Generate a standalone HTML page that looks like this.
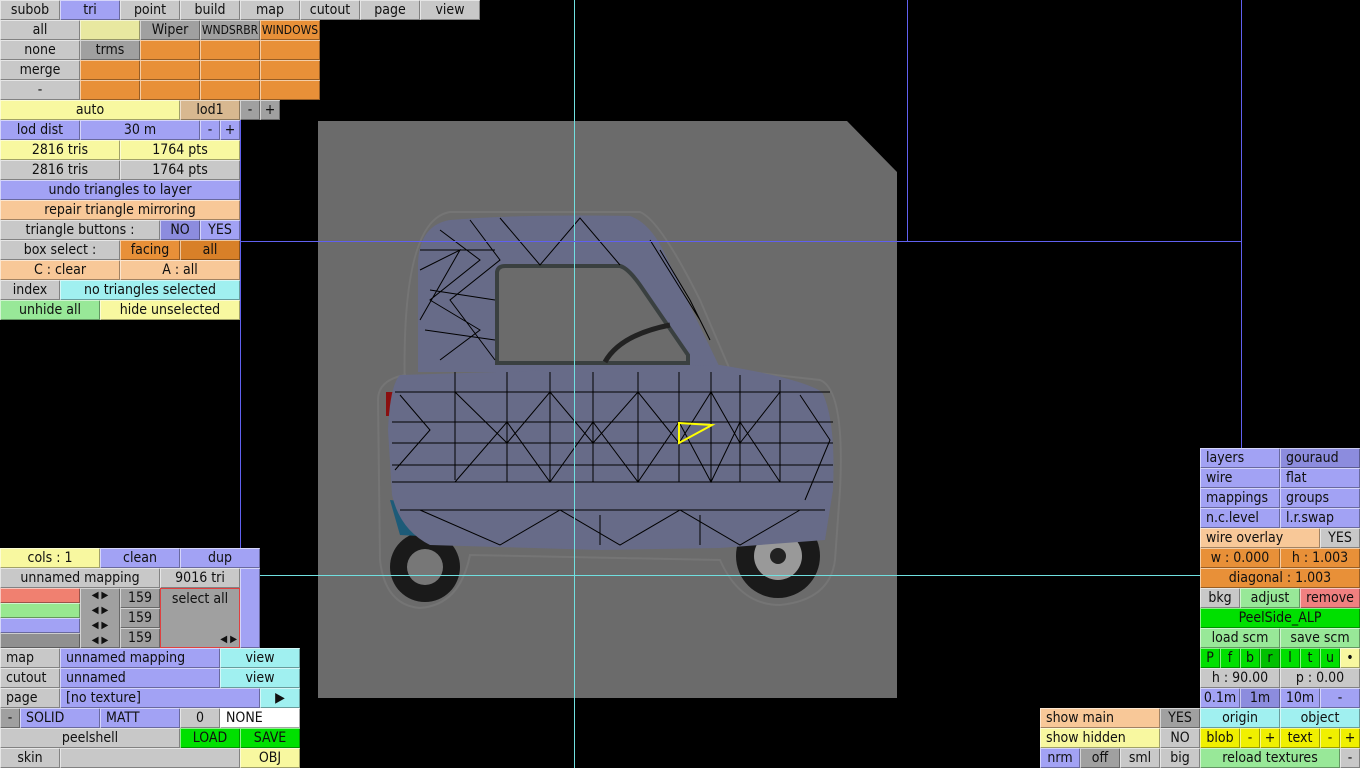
<!DOCTYPE html>
<html><head><meta charset="utf-8"><style>
body{margin:0;width:1360px;height:768px;background:#000;position:relative;overflow:hidden;font-family:"DejaVu Sans Condensed","DejaVu Sans","Liberation Sans",sans-serif;font-size:14px;color:#101010}
.b{position:absolute;height:20px;line-height:20px;text-align:center;box-sizing:border-box;box-shadow:inset 1px 1px 0 rgba(255,255,255,.55),inset -1px -1px 0 rgba(0,0,0,.35);white-space:nowrap;overflow:hidden}
.l{text-align:left;padding-left:6px}
.g{background:#c8c8c8}.dg{background:#a0a0a0}.bl{background:#a2a2f4}.db{background:#8c8cde}.y{background:#f8f8a0}.py{background:#e8e8a0}
.o{background:#e89038}.do{background:#d88028}.p{background:#f8c898}.c{background:#a0f0f0}.lg{background:#98e898}.gr{background:#00e000}.dgr{background:#00c000}.t{background:#d8b890}.r{background:#f08080}.w{background:#fff}.by{background:#f0f000}
.ln{position:absolute}
</style></head><body>
<svg width="1360" height="768" style="position:absolute;left:0;top:0">
<rect x="318" y="121" width="579" height="577" fill="#6b6b6b"/>
<polygon points="847,121 897,121 897,172" fill="#000"/>
<path d="M405,395 Q400,220 450,212 L640,212 Q660,220 700,300 L730,370 L820,380 Q845,390 840,490 L835,560 Q830,600 780,605 Q740,605 720,560 L470,555 Q460,605 420,608 Q385,605 380,560 L378,400 Q378,380 405,375 Z" fill="none" stroke="#757575" stroke-width="2"/>
<circle cx="425" cy="567" r="35" fill="#1a1a1a"/><circle cx="425" cy="567" r="18" fill="#777"/>
<circle cx="778" cy="556" r="42" fill="#1a1a1a"/><circle cx="778" cy="556" r="24" fill="#999"/><circle cx="778" cy="556" r="8" fill="#222"/>
<polygon points="390,500 400,535 600,545 720,548 725,535" fill="#1d5b78"/>
<path d="M418,372 L418,262 Q420,225 450,220 Q520,214 630,216 Q648,222 662,248 L722,372 Z" fill="#676b88"/>
<path d="M497,272 Q498,266 505,266 L620,266 Q628,268 640,285 L688,355 L688,363 L497,363 Z" fill="#6b6b6b" stroke="#3a4040" stroke-width="4"/>
<path d="M605,362 Q620,335 670,325" stroke="#222" stroke-width="5" fill="none"/>
<rect x="386" y="392" width="10" height="24" fill="#8a1010"/>
<path d="M400,375 L720,365 Q800,378 822,392 Q836,420 833,490 L825,540 L720,548 L600,550 L430,545 Q400,530 392,495 L388,430 Q390,385 400,375 Z" fill="#676b88"/>
<g stroke="#000" stroke-width="1" fill="none">
<path d="M455,372 V480 M507,372 V482 M550,372 V482 M593,372 V482 M638,372 V482 M679,372 V482 M711,372 V482 M740,375 V482 M780,380 V482"/>
<path d="M395,392 H830 M392,422 H833 M392,443 H833 M392,465 H833 M392,482 H833 M400,510 H825"/>
<path d="M455,392 L507,443 L550,392 L593,443 L638,392 L679,443 L711,392 L740,443 L780,392 M455,482 L507,422 L550,482 L593,422 L638,482 L679,422 L711,482 L740,422 L780,482"/>
<path d="M420,250 L495,250 M430,290 L495,300 M425,330 L495,340 M440,230 L480,260 L430,300 L480,330 L440,360 M420,270 L460,250 L420,320 M500,218 L540,265 L580,218 L620,265 M650,240 L700,320 M470,220 L500,260 L450,300 L495,360 M660,250 L690,300 L710,340"/>
<path d="M420,510 L500,545 L560,510 L620,545 L680,510 L740,545 L800,510 M600,515 V545 M700,515 V545 M400,395 L430,430 L395,470 M800,395 L830,440 L805,500"/>
</g>
<polygon points="679,423 712,425 679,443" fill="none" stroke="#ff0" stroke-width="2"/>
</svg>
<div class="ln" style="left:574px;top:0;width:1px;height:768px;background:#70e0e0"></div>
<div class="ln" style="left:240px;top:120px;width:1px;height:428px;background:#6060f0"></div>
<div class="ln" style="left:907px;top:0;width:1px;height:241px;background:#6060f0"></div>
<div class="ln" style="left:1241px;top:0;width:1px;height:448px;background:#6060f0"></div>
<div class="ln" style="left:240px;top:241px;width:1001px;height:1px;background:#6060f0"></div>
<div class="ln" style="left:260px;top:575px;width:940px;height:1px;background:#70e0e0"></div>

<div class="b g" style="left:0;top:0;width:60px">subob</div><div class="b bl" style="left:60px;top:0;width:60px">tri</div><div class="b g" style="left:120px;top:0;width:60px">point</div><div class="b g" style="left:180px;top:0;width:60px">build</div><div class="b g" style="left:240px;top:0;width:60px">map</div><div class="b g" style="left:300px;top:0;width:60px">cutout</div><div class="b g" style="left:360px;top:0;width:60px">page</div><div class="b g" style="left:420px;top:0;width:60px">view</div>

<div class="b g" style="left:0;top:20px;width:80px">all</div><div class="b py" style="left:80px;top:20px;width:60px"></div><div class="b dg" style="left:140px;top:20px;width:60px">Wiper</div><div class="b dg" style="left:200px;top:20px;width:60px;font-size:12px">WNDSRBR</div><div class="b o" style="left:260px;top:20px;width:60px;font-size:12px">WINDOWS</div>
<div class="b g" style="left:0;top:40px;width:80px">none</div><div class="b dg" style="left:80px;top:40px;width:60px">trms</div><div class="b o" style="left:140px;top:40px;width:60px"></div><div class="b o" style="left:200px;top:40px;width:60px"></div><div class="b o" style="left:260px;top:40px;width:60px"></div>
<div class="b g" style="left:0;top:60px;width:80px">merge</div><div class="b o" style="left:80px;top:60px;width:60px"></div><div class="b o" style="left:140px;top:60px;width:60px"></div><div class="b o" style="left:200px;top:60px;width:60px"></div><div class="b o" style="left:260px;top:60px;width:60px"></div>
<div class="b g" style="left:0;top:80px;width:80px">-</div><div class="b o" style="left:80px;top:80px;width:60px"></div><div class="b o" style="left:140px;top:80px;width:60px"></div><div class="b o" style="left:200px;top:80px;width:60px"></div><div class="b o" style="left:260px;top:80px;width:60px"></div>
<div class="b y" style="left:0;top:100px;width:180px">auto</div><div class="b t" style="left:180px;top:100px;width:60px">lod1</div><div class="b dg" style="left:240px;top:100px;width:20px">-</div><div class="b dg" style="left:260px;top:100px;width:20px">+</div>
<div class="b bl" style="left:0;top:120px;width:80px">lod dist</div><div class="b bl" style="left:80px;top:120px;width:120px">30 m</div><div class="b bl" style="left:200px;top:120px;width:20px">-</div><div class="b bl" style="left:220px;top:120px;width:20px">+</div>
<div class="b y" style="left:0;top:140px;width:120px">2816 tris</div><div class="b y" style="left:120px;top:140px;width:120px">1764 pts</div>
<div class="b g" style="left:0;top:160px;width:120px">2816 tris</div><div class="b g" style="left:120px;top:160px;width:120px">1764 pts</div>
<div class="b bl" style="left:0;top:180px;width:240px">undo triangles to layer</div>
<div class="b p" style="left:0;top:200px;width:240px">repair triangle mirroring</div>
<div class="b g" style="left:0;top:220px;width:160px">triangle buttons :</div><div class="b db" style="left:160px;top:220px;width:40px">NO</div><div class="b bl" style="left:200px;top:220px;width:40px">YES</div>
<div class="b g" style="left:0;top:240px;width:120px">box select :</div><div class="b o" style="left:120px;top:240px;width:60px">facing</div><div class="b do" style="left:180px;top:240px;width:60px">all</div>
<div class="b p" style="left:0;top:260px;width:120px">C : clear</div><div class="b p" style="left:120px;top:260px;width:120px">A : all</div>
<div class="b g" style="left:0;top:280px;width:60px">index</div><div class="b c" style="left:60px;top:280px;width:180px">no triangles selected</div>
<div class="b lg" style="left:0;top:300px;width:100px">unhide all</div><div class="b y" style="left:100px;top:300px;width:140px">hide unselected</div>

<div class="b y" style="left:0;top:548px;width:100px">cols : 1</div><div class="b bl" style="left:100px;top:548px;width:80px">clean</div><div class="b bl" style="left:180px;top:548px;width:80px">dup</div>
<div class="b g" style="left:0;top:568px;width:160px">unnamed mapping</div><div class="b g" style="left:160px;top:568px;width:80px">9016 tri</div>
<div class="b bl" style="left:240px;top:568px;width:20px;height:80px"></div>
<div class="b" style="left:0;top:588px;width:80px;height:15px;background:#f08070"></div>
<div class="b" style="left:0;top:603px;width:80px;height:15px;background:#98e890"></div>
<div class="b" style="left:0;top:618px;width:80px;height:15px;background:#a2a2f4"></div>
<div class="b" style="left:0;top:633px;width:80px;height:15px;background:#909090"></div>
<div class="b dg" style="left:80px;top:588px;width:40px;height:60px;font-size:10px;line-height:15px">◀ ▶<br>◀ ▶<br>◀ ▶<br>◀ ▶</div>
<div class="b dg" style="left:120px;top:588px;width:40px">159</div><div class="b dg" style="left:120px;top:608px;width:40px">159</div><div class="b dg" style="left:120px;top:628px;width:40px">159</div>
<div class="b dg" style="left:160px;top:588px;width:80px;height:60px;line-height:20px;border:1px solid #e04040;box-shadow:none">select all<div style="position:absolute;right:2px;bottom:1px;font-size:10px;line-height:12px">◀ ▶</div></div>
<div class="b g l" style="left:0;top:648px;width:60px">map</div><div class="b bl l" style="left:60px;top:648px;width:160px">unnamed mapping</div><div class="b c" style="left:220px;top:648px;width:80px">view</div>
<div class="b g l" style="left:0;top:668px;width:60px">cutout</div><div class="b bl l" style="left:60px;top:668px;width:160px">unnamed</div><div class="b c" style="left:220px;top:668px;width:80px">view</div>
<div class="b g l" style="left:0;top:688px;width:60px">page</div><div class="b bl l" style="left:60px;top:688px;width:200px">[no texture]</div><div class="b c" style="left:260px;top:688px;width:40px">▶</div>
<div class="b dg" style="left:0;top:708px;width:20px">-</div><div class="b bl l" style="left:20px;top:708px;width:80px">SOLID</div><div class="b bl l" style="left:100px;top:708px;width:80px">MATT</div><div class="b g" style="left:180px;top:708px;width:40px">0</div><div class="b w l" style="left:220px;top:708px;width:80px">NONE</div>
<div class="b g" style="left:0;top:728px;width:180px">peelshell</div><div class="b gr" style="left:180px;top:728px;width:60px">LOAD</div><div class="b gr" style="left:240px;top:728px;width:60px">SAVE</div>
<div class="b g" style="left:0;top:748px;width:60px">skin</div><div class="b g" style="left:60px;top:748px;width:180px"></div><div class="b y" style="left:240px;top:748px;width:60px">OBJ</div>

<div class="b bl l" style="left:1200px;top:448px;width:80px">layers</div><div class="b db l" style="left:1280px;top:448px;width:80px">gouraud</div>
<div class="b bl l" style="left:1200px;top:468px;width:80px">wire</div><div class="b bl l" style="left:1280px;top:468px;width:80px">flat</div>
<div class="b bl l" style="left:1200px;top:488px;width:80px">mappings</div><div class="b bl l" style="left:1280px;top:488px;width:80px">groups</div>
<div class="b bl l" style="left:1200px;top:508px;width:80px">n.c.level</div><div class="b bl l" style="left:1280px;top:508px;width:80px">l.r.swap</div>
<div class="b p l" style="left:1200px;top:528px;width:120px">wire overlay</div><div class="b g" style="left:1320px;top:528px;width:40px">YES</div>
<div class="b o" style="left:1200px;top:548px;width:80px">w : 0.000</div><div class="b o" style="left:1280px;top:548px;width:80px">h : 1.003</div>
<div class="b o" style="left:1200px;top:568px;width:160px">diagonal : 1.003</div>
<div class="b g" style="left:1200px;top:588px;width:40px">bkg</div><div class="b lg" style="left:1240px;top:588px;width:60px">adjust</div><div class="b r" style="left:1300px;top:588px;width:60px">remove</div>
<div class="b gr" style="left:1200px;top:608px;width:160px">PeelSide_ALP</div>
<div class="b lg" style="left:1200px;top:628px;width:80px">load scm</div><div class="b lg" style="left:1280px;top:628px;width:80px">save scm</div>
<div class="b gr" style="left:1200px;top:648px;width:20px">P</div><div class="b gr" style="left:1220px;top:648px;width:20px">f</div><div class="b gr" style="left:1240px;top:648px;width:20px">b</div><div class="b dgr" style="left:1260px;top:648px;width:20px">r</div><div class="b gr" style="left:1280px;top:648px;width:20px">l</div><div class="b gr" style="left:1300px;top:648px;width:20px">t</div><div class="b gr" style="left:1320px;top:648px;width:20px">u</div><div class="b y" style="left:1340px;top:648px;width:20px">•</div>
<div class="b g" style="left:1200px;top:668px;width:80px">h : 90.00</div><div class="b g" style="left:1280px;top:668px;width:80px">p : 0.00</div>
<div class="b bl" style="left:1200px;top:688px;width:40px">0.1m</div><div class="b db" style="left:1240px;top:688px;width:40px">1m</div><div class="b bl" style="left:1280px;top:688px;width:40px">10m</div><div class="b bl" style="left:1320px;top:688px;width:40px">-</div>
<div class="b p l" style="left:1040px;top:708px;width:120px">show main</div><div class="b dg" style="left:1160px;top:708px;width:40px">YES</div><div class="b c" style="left:1200px;top:708px;width:80px">origin</div><div class="b c" style="left:1280px;top:708px;width:80px">object</div>
<div class="b y l" style="left:1040px;top:728px;width:120px">show hidden</div><div class="b g" style="left:1160px;top:728px;width:40px">NO</div><div class="b by" style="left:1200px;top:728px;width:40px">blob</div><div class="b by" style="left:1240px;top:728px;width:20px">-</div><div class="b by" style="left:1260px;top:728px;width:20px">+</div><div class="b by" style="left:1280px;top:728px;width:40px">text</div><div class="b by" style="left:1320px;top:728px;width:20px">-</div><div class="b by" style="left:1340px;top:728px;width:20px">+</div>
<div class="b bl" style="left:1040px;top:748px;width:40px">nrm</div><div class="b dg" style="left:1080px;top:748px;width:40px">off</div><div class="b g" style="left:1120px;top:748px;width:40px">sml</div><div class="b g" style="left:1160px;top:748px;width:40px">big</div><div class="b lg" style="left:1200px;top:748px;width:140px">reload textures</div><div class="b g" style="left:1340px;top:748px;width:20px">-</div>
</body></html>
